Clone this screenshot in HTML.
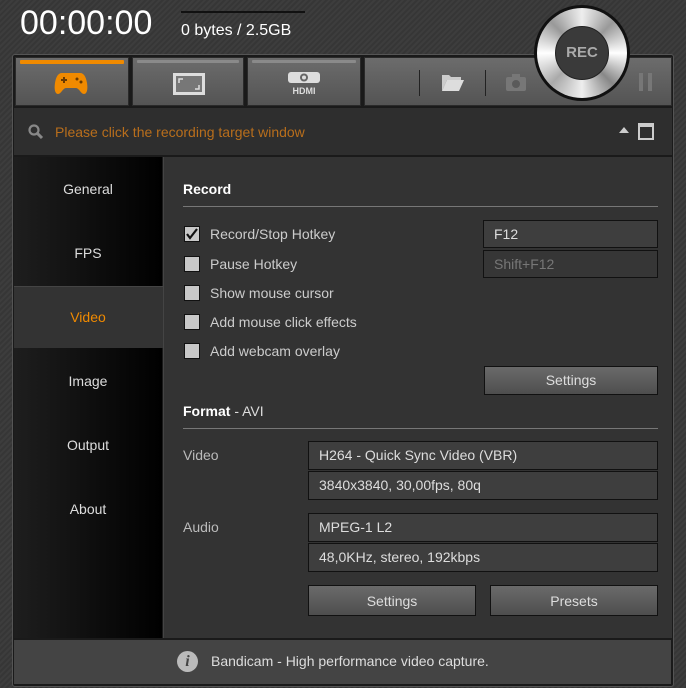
<!DOCTYPE html>
<html><head><style>
*{margin:0;padding:0;box-sizing:border-box}
body{width:686px;height:688px;overflow:hidden;background:#3a3a3a;background-image:repeating-linear-gradient(135deg,#3d3d3d 0 2px,#363636 2px 4px);font-family:"Liberation Sans",sans-serif;position:relative;color:#ddd}
.a{position:absolute}
.tab{position:absolute;top:57px;height:49px;background:linear-gradient(#6c6c6c,#545454);border:1px solid #2a2a2a}
.tab .bar{position:absolute;left:4px;right:4px;top:2px;height:3px;background:#8a8a8a;border-radius:1px}
.cb{position:absolute;left:184px;width:16px;height:16px;background:#c8c8c8;border:1px solid #111}
.lbl{position:absolute;left:210px;font-size:14px;color:#ccc}
.box{position:absolute;background:#3e3e3e;border:1px solid #111;font-size:14px;color:#ddd;padding-left:10px;line-height:26px}
.btn{position:absolute;background:linear-gradient(#6a6a6a,#4e4e4e);border:1px solid #111;font-size:14px;color:#ddd;text-align:center;line-height:27px}
.nav{position:absolute;left:14px;width:148px;text-align:center;font-size:14px;color:#ddd}
</style></head><body>
<div class="a" style="left:20px;top:4px;font-size:34px;color:#fff">00:00:00</div>
<div class="a" style="left:181px;top:11px;width:124px;height:2px;background:#111"></div>
<div class="a" style="left:181px;top:22px;font-size:16px;color:#fff">0 bytes / 2.5GB</div>
<div class="a" style="left:12px;top:54px;width:662px;height:633px;background:#1a1a1a;border:1px solid #555;border-radius:3px"></div>
<div class="tab" style="left:15px;width:114px"><div class="bar" style="background:#f08a00;height:4px"></div>
<svg class="a" style="left:38px;top:13px" width="34" height="24" viewBox="0 0 34 24"><path d="M8 2h18c4 0 6 4 7 10s0 11-3 11-5-6-8-6H12c-3 0-5 6-8 6S0 18 1 12 4 2 8 2z" fill="#f08a00"/><path d="M7 9h6M10 6v6" stroke="#6a3a00" stroke-width="2"/><circle cx="23" cy="8" r="1.5" fill="#6a3a00"/><circle cx="27" cy="11" r="1.5" fill="#6a3a00"/></svg></div>
<div class="tab" style="left:132px;width:112px"><div class="bar"></div>
<svg class="a" style="left:39px;top:14px" width="34" height="24"><rect x="1" y="1" width="32" height="22" fill="#ddd"/><rect x="4" y="4" width="26" height="16" fill="#777"/><path d="M7 11V7h4M27 13v4h-4" stroke="#ddd" stroke-width="1.5" fill="none"/></svg></div>
<div class="tab" style="left:247px;width:114px"><div class="bar"></div>
<svg class="a" style="left:38px;top:13px" width="36" height="26"><rect x="2" y="1" width="32" height="11" rx="3" fill="#ddd"/><circle cx="18" cy="6.5" r="4" fill="#666"/><circle cx="18" cy="6.5" r="2" fill="#ddd"/><text x="18" y="23" font-size="9" font-weight="bold" fill="#ddd" text-anchor="middle" font-family="Liberation Sans">HDMI</text></svg></div>
<div class="tab" style="left:364px;width:308px">
<div class="a" style="left:54px;top:12px;width:1px;height:26px;background:#222"></div>
<svg class="a" style="left:76px;top:14px" width="24" height="20"><path d="M1 3h7l2 2h10v3H6L1 19z" fill="#ccc"/><path d="M6 8h17l-5 11H1z" fill="#ddd"/></svg>
<div class="a" style="left:120px;top:12px;width:1px;height:26px;background:#222"></div>
<svg class="a" style="left:140px;top:14px" width="22" height="20"><rect x="1" y="5" width="20" height="14" rx="2" fill="#777"/><rect x="7" y="2" width="8" height="4" fill="#777"/><circle cx="11" cy="12" r="4" fill="#5a5a5a"/></svg>
<div class="a" style="left:274px;top:15px;width:4px;height:18px;background:#777"></div><div class="a" style="left:283px;top:15px;width:4px;height:18px;background:#777"></div>
</div>
<div class="a" style="left:534px;top:5px;width:96px;height:96px;border-radius:50%;background:#111"></div>
<div class="a" style="left:537px;top:8px;width:90px;height:90px;border-radius:50%;background:conic-gradient(#eee,#999,#fff,#888,#eee,#aaa,#fff,#999,#eee)"></div>
<div class="a" style="left:555px;top:26px;width:54px;height:54px;border-radius:50%;background:#3a3a3a;border:1px solid #222;color:#aaa;font-weight:bold;font-size:15px;text-align:center;line-height:52px">REC</div>
<div class="a" style="left:14px;top:108px;width:658px;height:47px;background:#2e2e2e"></div>
<svg class="a" style="left:28px;top:124px" width="16" height="16"><circle cx="6" cy="6" r="4.5" stroke="#888" stroke-width="2.2" fill="none"/><path d="M9 9l5 5" stroke="#888" stroke-width="3"/></svg>
<div class="a" style="left:55px;top:124px;font-size:14px;color:#b86e1c">Please click the recording target window</div>
<div class="a" style="left:619px;top:127px;width:0;height:0;border-left:5px solid transparent;border-right:5px solid transparent;border-bottom:6px solid #ccc"></div>
<div class="a" style="left:638px;top:123px;width:16px;height:17px;border:2px solid #ccc;border-top-width:4px"></div>
<div class="a" style="left:14px;top:157px;width:148px;height:481px;background:linear-gradient(90deg,#1e1e1e,#000)"></div>
<div class="a" style="left:14px;top:286px;width:149px;height:62px;background:#333;border-top:1px solid #444"></div>
<div class="a" style="left:163px;top:157px;width:509px;height:481px;background:#333;border-left:1px solid #444"></div>
<div class="nav" style="top:181px">General</div>
<div class="nav" style="top:245px">FPS</div>
<div class="nav" style="top:309px;color:#f08a00">Video</div>
<div class="nav" style="top:373px">Image</div>
<div class="nav" style="top:437px">Output</div>
<div class="nav" style="top:501px">About</div>
<div class="a" style="left:183px;top:181px;font-size:14px;font-weight:bold;color:#fff">Record</div>
<div class="a" style="left:183px;top:206px;width:475px;height:1px;background:#777"></div>
<div class="cb" style="top:226px"><svg width="14" height="14"><path d="M2 7l3 4 7-9" stroke="#111" stroke-width="2.2" fill="none"/></svg></div>
<div class="lbl" style="top:226px">Record/Stop Hotkey</div>
<div class="cb" style="top:256px"></div><div class="lbl" style="top:256px">Pause Hotkey</div>
<div class="cb" style="top:285px"></div><div class="lbl" style="top:285px">Show mouse cursor</div>
<div class="cb" style="top:314px"></div><div class="lbl" style="top:314px">Add mouse click effects</div>
<div class="cb" style="top:343px"></div><div class="lbl" style="top:343px">Add webcam overlay</div>
<div class="box" style="left:483px;top:220px;width:175px;height:28px;line-height:27px">F12</div>
<div class="box" style="left:483px;top:250px;width:175px;height:28px;color:#777;background:#363636;line-height:27px">Shift+F12</div>
<div class="btn" style="left:484px;top:366px;width:174px;height:29px">Settings</div>
<div class="a" style="left:183px;top:403px;font-size:14px;color:#ddd"><b style="color:#fff">Format</b> - AVI</div>
<div class="a" style="left:183px;top:428px;width:475px;height:1px;background:#777"></div>
<div class="a" style="left:183px;top:447px;font-size:14px;color:#bbb">Video</div>
<div class="a" style="left:183px;top:519px;font-size:14px;color:#bbb">Audio</div>
<div class="box" style="left:308px;top:441px;width:350px;height:29px">H264 - Quick Sync Video (VBR)</div>
<div class="box" style="left:308px;top:471px;width:350px;height:29px">3840x3840, 30,00fps, 80q</div>
<div class="box" style="left:308px;top:513px;width:350px;height:29px">MPEG-1 L2</div>
<div class="box" style="left:308px;top:543px;width:350px;height:29px">48,0KHz, stereo, 192kbps</div>
<div class="btn" style="left:308px;top:585px;width:168px;height:31px;line-height:30px">Settings</div>
<div class="btn" style="left:490px;top:585px;width:168px;height:31px;line-height:30px">Presets</div>
<div class="a" style="left:14px;top:640px;width:657px;height:44px;background:#444"></div>
<div class="a" style="left:177px;top:651px;width:21px;height:21px;border-radius:50%;background:#bbb;color:#444;font:italic bold 16px 'Liberation Serif',serif;text-align:center;line-height:21px">i</div>
<div class="a" style="left:211px;top:653px;font-size:14px;color:#ddd">Bandicam - High performance video capture.</div>
</body></html>
